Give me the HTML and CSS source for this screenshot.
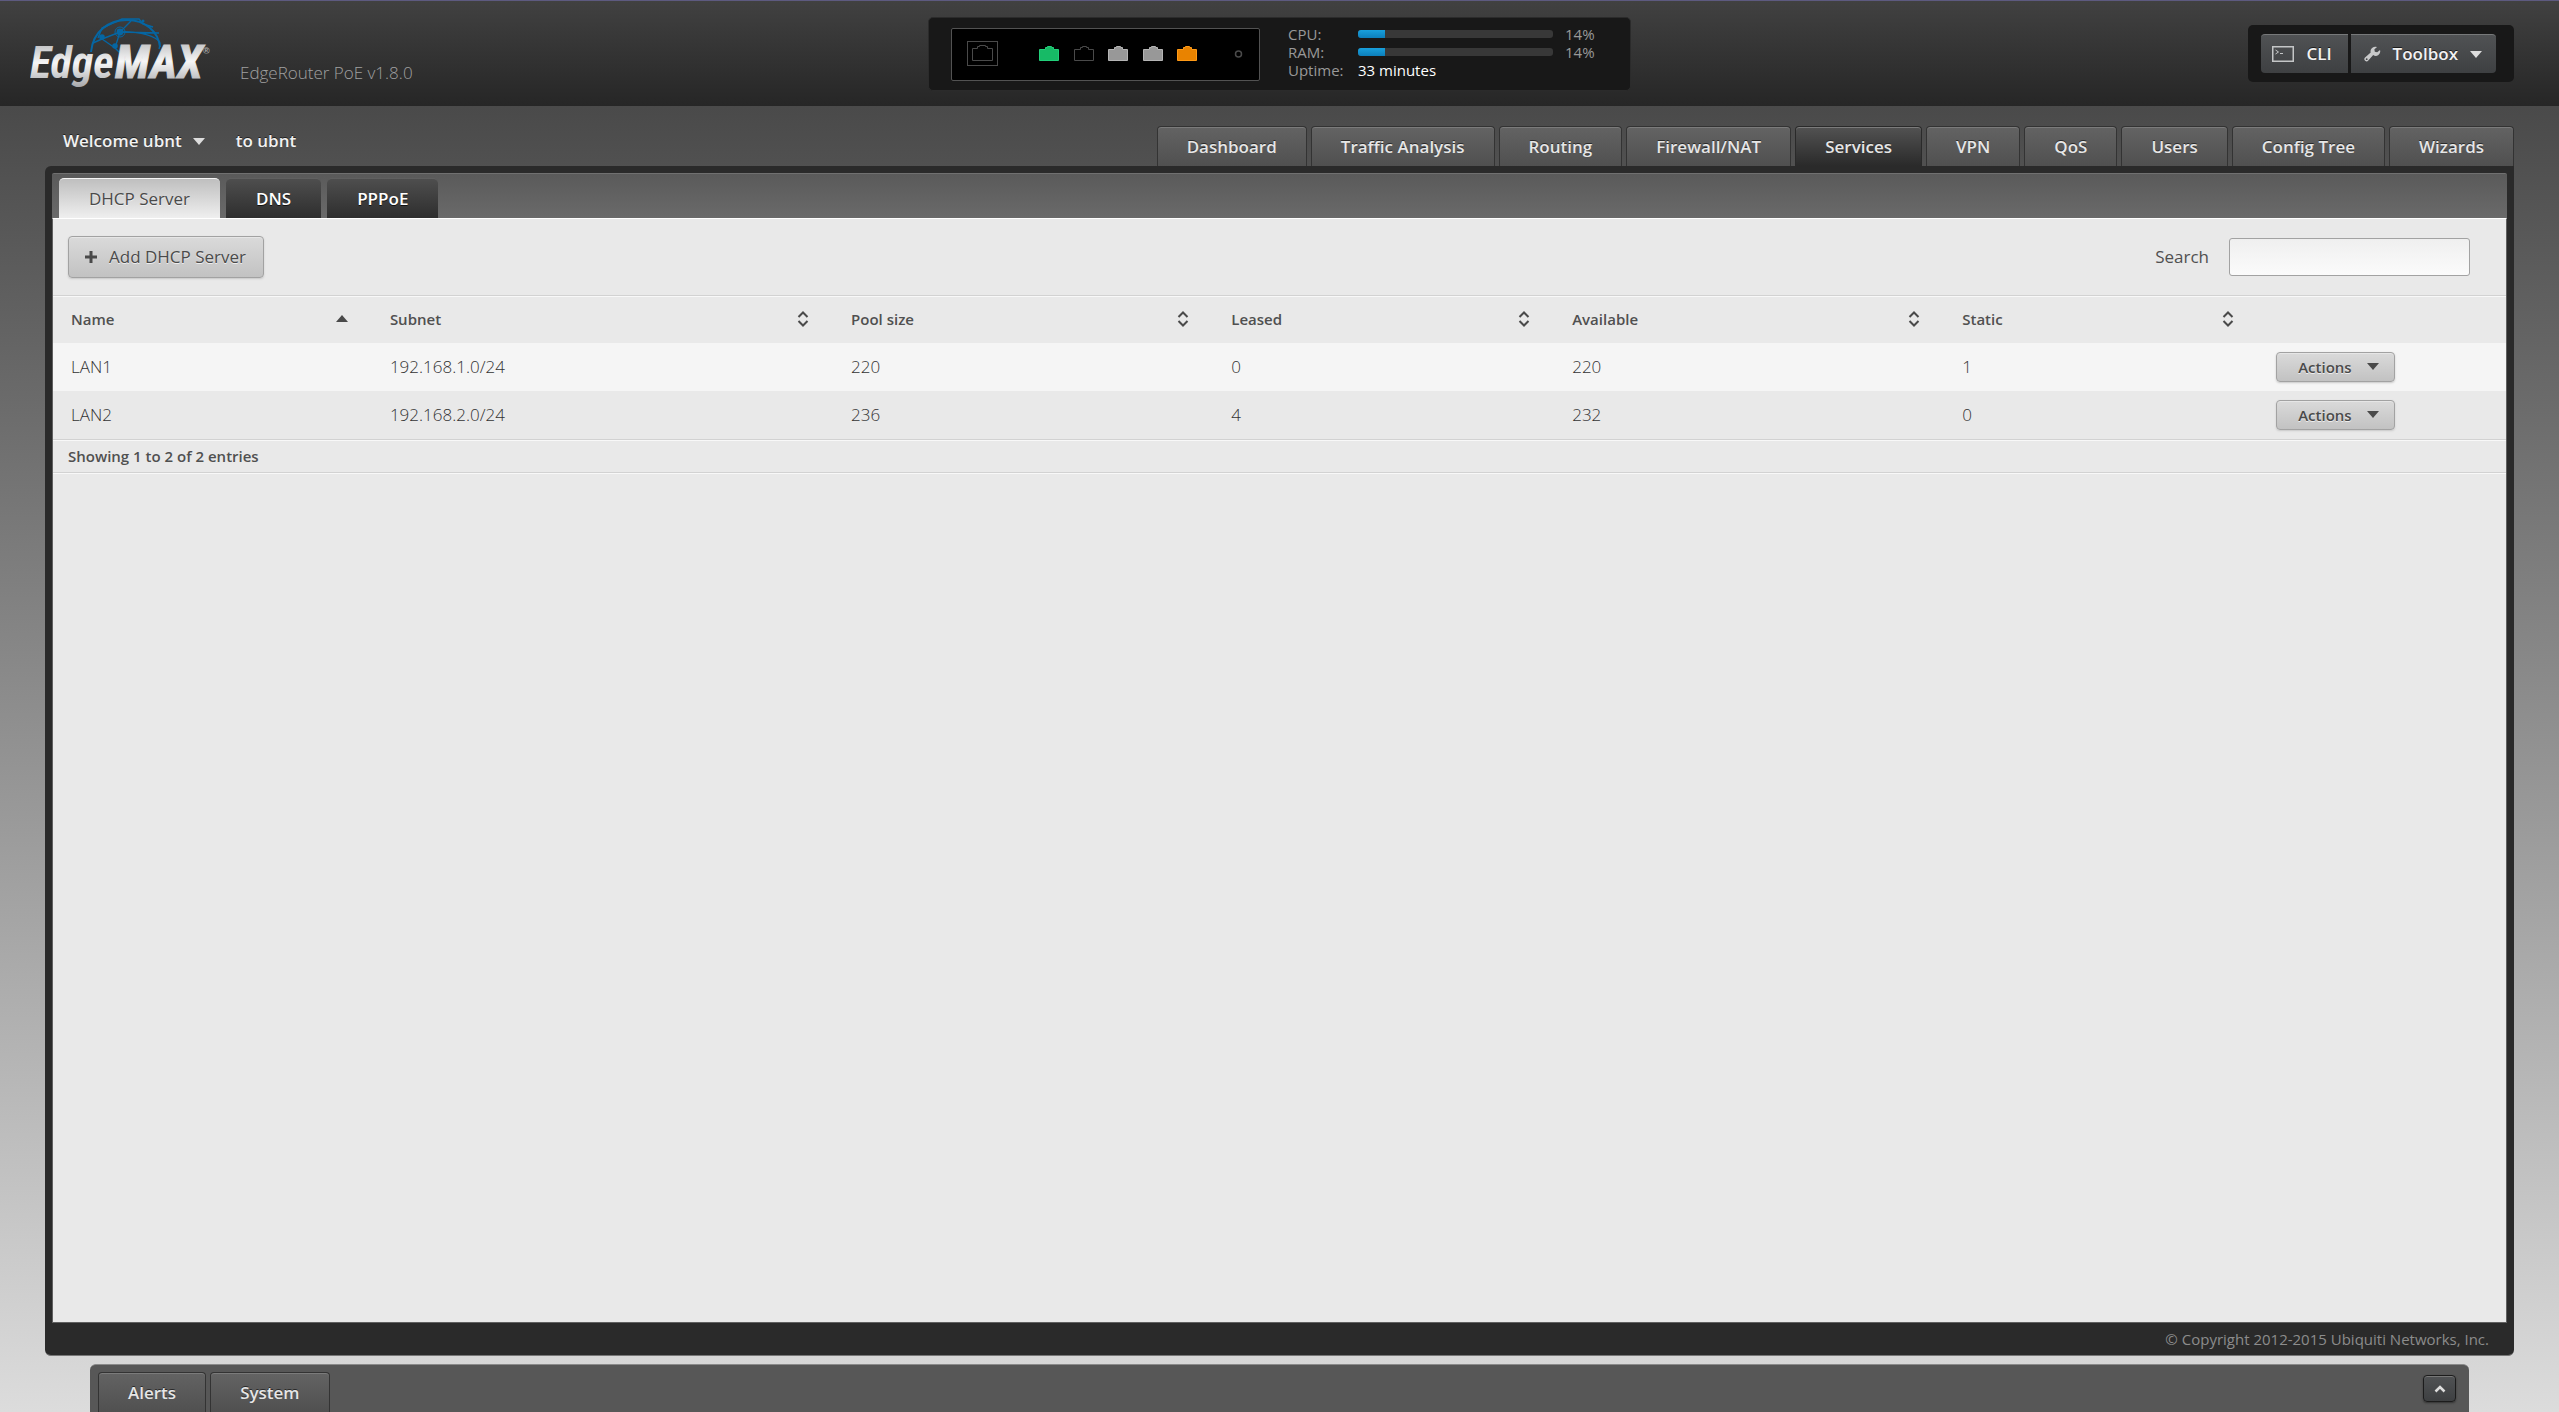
FILE: index.html
```html
<!DOCTYPE html>
<html lang="en">
<head>
<meta charset="utf-8">
<title>EdgeMAX - Services</title>
<link rel="stylesheet" href="styles.css">
</head>
<body>
<header class="header">
  <div class="brand">
    <svg class="logo" viewBox="0 0 182 76" role="img" aria-label="EdgeMAX">
      <defs>
        <linearGradient id="silver" x1="0" y1="0" x2="0" y2="1">
          <stop offset="0.15" stop-color="#c2c3c5"/><stop offset="0.5" stop-color="#f6f6f6"/><stop offset="0.95" stop-color="#a9aaad"/>
        </linearGradient>
      </defs>
      <g fill="none" stroke="#0566a3">
        <path d="M61 35C63 14 79 3 97 3c18 0 31 11 33 27" stroke-width="2"/>
        <path d="M72 22 90 15l39 1M72 22l13 9 5-16 11-11M85 31l6 6M90 15c14-1 30 2 38 8 3 3 2 5 1 9M68 21 72 11 92 2h17l4 5M113 7l10 3M72 22l-9 4" stroke-width="1.4"/>
        <circle cx="90" cy="15" r="5" stroke-width="1"/>
      </g>
      <g fill="#0566a3"><circle cx="90" cy="15" r="3.4"/><circle cx="72" cy="20" r="2.8"/><circle cx="85" cy="29" r="2.8"/><circle cx="113" cy="4" r="1.5"/></g>
      <text x="0" y="61" class="logo-word" fill="url(#silver)">Edge</text>
      <text x="85" y="61" class="logo-word logo-max" fill="url(#silver)" stroke="url(#silver)">MAX</text>
      <text x="173" y="37" class="logo-reg">®</text>
    </svg>
    <span class="model">EdgeRouter PoE v1.8.0</span>
  </div>

  <section class="status">
    <svg class="ports" viewBox="0 0 307 51" aria-label="Ports">
      <defs><path id="port" d="M.5 3.500H6.500V1.500H8.500V.5H12.500V1.500H14.500V3.500H19.500V14.500H.5Z"/></defs>
      <g fill="none" stroke="#4a4a4a">
        <rect x="15.500" y="12.500" width="30" height="24"/>
        <path d="M20.500 19.500h5v-2h2v-1h6v1h2v2h5v12h-20z"/>
        <circle cx="286.500" cy="25" r="3" stroke-width="1.500"/>
        <use href="#port" x="122" y="17"/>
      </g>
      <use href="#port" x="87" y="17" fill="#17ba66" stroke="#22d07a"/>
      <use href="#port" x="156" y="17" fill="#989898" stroke="#b5b5b5"/>
      <use href="#port" x="191" y="17" fill="#989898" stroke="#b5b5b5"/>
      <use href="#port" x="225" y="17" fill="#e98300" stroke="#ff9a16"/>
    </svg>
    <dl class="stats">
      <dt>CPU:</dt><dd class="bar"><span class="fill" style="width:14%"></span></dd><dd>14%</dd>
      <dt>RAM:</dt><dd class="bar"><span class="fill" style="width:14%"></span></dd><dd>14%</dd>
      <dt>Uptime:</dt><dd class="uptime">33 minutes</dd>
    </dl>
  </section>

  <div class="tools">
    <button class="tool" type="button">
      <svg width="22" height="16" viewBox="0 0 22 16" fill="none" stroke="#c4c6c7"><rect x=".75" y=".75" width="20.500" height="14.500" stroke-width="1.500"/><path d="M3.500 4l3 2-3 2M8 7.500h3"/></svg>
      CLI
    </button>
    <button class="tool" type="button">
      <svg width="17" height="16" viewBox="0 0 17 16"><path d="M11.500.8a4.500 4.500 0 0 0-4.800 5.700L1 11.600a2.200 2.200 0 1 0 3.300 3l4.900-5.500A4.500 4.500 0 0 0 16 4l-2.800 2.300-2.400-.6-.4-2.400 2.700-2.200zM2.700 12.300a.9.9 0 1 1 0 1.800.9.900 0 0 1 0-1.800z" fill="#c8c9ca" fill-rule="evenodd"/></svg>
      Toolbox
      <i class="caret"></i>
    </button>
  </div>
</header>

<div class="topbar">
  <div class="welcome"><button class="user" type="button">Welcome ubnt <i class="caret"></i></button><span>to ubnt</span></div>
  <nav class="nav">
    <a href="#">Dashboard</a>
    <a href="#">Traffic Analysis</a>
    <a href="#">Routing</a>
    <a href="#">Firewall/NAT</a>
    <a href="#" class="current">Services</a>
    <a href="#">VPN</a>
    <a href="#">QoS</a>
    <a href="#">Users</a>
    <a href="#">Config Tree</a>
    <a href="#">Wizards</a>
  </nav>
</div>

<main class="panel">
  <nav class="tabs">
    <a href="#" class="active">DHCP Server</a>
    <a href="#">DNS</a>
    <a href="#">PPPoE</a>
  </nav>
  <div class="content">
    <div class="toolbar">
      <button class="btn btn-add" type="button">
        <svg width="14" height="14" viewBox="0 0 14 14"><path d="M1 7h12M7 1v12" stroke="#4a4a4a" stroke-width="3"/></svg>
        Add DHCP Server
      </button>
      <div class="search"><label for="search">Search</label><input id="search" type="text"></div>
    </div>
    <table class="grid">
      <colgroup><col class="c-name"><col class="c-subnet"><col class="c-pool"><col class="c-leased"><col class="c-avail"><col class="c-static"><col></colgroup>
      <thead>
        <tr>
          <th><div>Name <i class="caret up"></i></div></th>
          <th><div>Subnet <svg class="sort" viewBox="0 0 12 16"><path d="M1.500 6 6 1.500 10.500 6M1.500 10 6 14.500 10.500 10"/></svg></div></th>
          <th><div>Pool size <svg class="sort" viewBox="0 0 12 16"><path d="M1.500 6 6 1.500 10.500 6M1.500 10 6 14.500 10.500 10"/></svg></div></th>
          <th><div>Leased <svg class="sort" viewBox="0 0 12 16"><path d="M1.500 6 6 1.500 10.500 6M1.500 10 6 14.500 10.500 10"/></svg></div></th>
          <th><div>Available <svg class="sort" viewBox="0 0 12 16"><path d="M1.500 6 6 1.500 10.500 6M1.500 10 6 14.500 10.500 10"/></svg></div></th>
          <th><div>Static <svg class="sort" viewBox="0 0 12 16"><path d="M1.500 6 6 1.500 10.500 6M1.500 10 6 14.500 10.500 10"/></svg></div></th>
          <th></th>
        </tr>
      </thead>
      <tbody>
        <tr><td>LAN1</td><td>192.168.1.0/24</td><td>220</td><td>0</td><td>220</td><td>1</td><td><button class="btn btn-actions" type="button">Actions <i class="caret"></i></button></td></tr>
        <tr><td>LAN2</td><td>192.168.2.0/24</td><td>236</td><td>4</td><td>232</td><td>0</td><td><button class="btn btn-actions" type="button">Actions <i class="caret"></i></button></td></tr>
      </tbody>
    </table>
    <p class="info">Showing 1 to 2 of 2 entries</p>
  </div>
  <footer class="copyright">© Copyright 2012-2015 Ubiquiti Networks, Inc.</footer>
</main>

<div class="dock">
  <div class="nav">
    <a href="#">Alerts</a>
    <a href="#">System</a>
  </div>
  <button class="expand" type="button" aria-label="Expand"><svg width="12" height="8" viewBox="0 0 12 8"><path d="M1.500 6.500 6 2l4.500 4.500" fill="none" stroke="#ddd" stroke-width="2.500"/></svg></button>
</div>
</body>
</html>
```
FILE: styles.css
```css
* { box-sizing: border-box; }
body {
  margin: 0;
  min-height: 100vh;
  display: flex;
  flex-direction: column;
  font: 17px/20px "Open Sans", sans-serif;
  color: #505050;
  background: linear-gradient(#3e3e3e, #dcdcdc);
}
button { font: inherit; cursor: pointer; }
a { text-decoration: none; }
svg { flex: none; }

.caret {
  width: 0;
  height: 0;
  border: 6px solid transparent;
  border-top: 7px solid #ddd;
  border-bottom: 0;
}
.caret.up { border-top: 0; border-bottom: 7px solid #4a4a4a; }

.header {
  display: grid;
  grid-template-columns: 1fr auto 1fr;
  align-items: start;
  height: 106px;
  padding: 16px 30px 0;
  border-top: 1px solid #5d5a80;
  background: linear-gradient(#414141, #262626);
}
.brand { display: flex; align-items: flex-start; gap: 28px; }
.logo { width: 182px; height: 76px; }
.logo-word { font: italic 700 44px "Liberation Sans Narrow", "Roboto Condensed", "Liberation Sans", sans-serif; }
.logo-max { font-size: 47px; stroke-width: 1; }
.logo-reg { font: 700 9px "Liberation Sans", sans-serif; fill: #aaa; }
.model { margin-top: 46px; font-weight: 300; color: #a0a0a0; }

.status {
  display: flex;
  width: 703px;
  height: 74px;
  padding: 10px 22px;
  border: 1px solid #2b2b2b;
  border-radius: 5px;
  background: #181818;
}
.ports { width: 309px; height: 53px; border: 1px solid #525252; border-radius: 2px; background: #000; }
.stats {
  display: grid;
  grid-template-columns: 70px 195px auto;
  grid-auto-rows: 18px;
  align-items: center;
  align-self: flex-start;
  margin: -3px 0 0 28px;
  font-size: 15px;
  line-height: 18px;
  color: #999;
}
.stats dd { margin: 0 0 0 12px; }
.stats .bar { height: 8px; margin: 0; border-radius: 3px; background: #383838; overflow: hidden; }
.fill { display: block; height: 100%; background: linear-gradient(#18a0dc, #0c7fbb); }
.stats .uptime { grid-column: 2 / 4; margin: 0; color: #fff; }

.tools {
  justify-self: end;
  display: flex;
  gap: 3px;
  margin: 8px 15px 0 0;
  padding: 9px 18px 9px 13px;
  border-radius: 5px;
  background: #181818;
}
.tool {
  display: flex;
  align-items: center;
  gap: 12px;
  height: 39px;
  padding: 0 16px 0 11px;
  border: 0;
  border-top: 1px solid #77797a;
  background: linear-gradient(#505254, #3e4042);
  font-weight: 600;
  color: #f2f2f2;
  text-shadow: 0 -1px #1c1c1c;
}
.tool:first-child { border-radius: 4px 0 0 4px; }
.tool:last-child { gap: 12px; padding: 0 14px 0 13px; border-radius: 0 4px 4px 0; }

.topbar { display: flex; justify-content: space-between; margin: 0 45px; padding-top: 20px; }
.welcome { display: flex; gap: 31px; padding: 5px 18px; font-weight: 600; color: #f2f2f2; text-shadow: 0 -1px #222; }
.user {
  display: flex;
  align-items: center;
  gap: 11px;
  height: 20px;
  padding: 0;
  border: 0;
  background: none;
  color: inherit;
  text-shadow: inherit;
}
.nav { display: flex; gap: 4px; }
.nav a {
  height: 40px;
  padding: 10px 29px;
  border: 1px solid #333;
  border-bottom: 0;
  border-radius: 4px 4px 0 0;
  background: linear-gradient(#636363, #505050);
  box-shadow: inset 0 1px #7b7b7b;
  font-weight: 600;
  color: #e6e6e6;
  text-shadow: 0 -1px #2a2a2a;
}
.nav .current { background: linear-gradient(#525252, #2a2a2a); border-color: #2a2a2a; }

.panel {
  flex: 1;
  display: flex;
  flex-direction: column;
  margin: 0 45px;
  padding: 7px 7px 0;
  border-bottom: 1px solid #777;
  border-radius: 6px 0 6px 6px;
  background: #2a2a2a;
}
.tabs {
  display: flex;
  gap: 6px;
  height: 45px;
  padding: 4px 7px 0;
  border-top: 1px solid #707070;
  border-radius: 2px 2px 0 0;
  background: linear-gradient(#5a5a5a, #6a6a6a);
}
.tabs a {
  padding: 10px 30px;
  border-top: 1px solid #606060;
  border-radius: 5px 5px 0 0;
  background: linear-gradient(#4e4e4e, #2e2e2e);
  font-weight: 600;
  color: #fff;
  text-shadow: 0 1px #111;
}
.tabs .active { border-color: #f5f5f5; background: linear-gradient(#bfbfbf, #efefef); color: #4a4a4a; font-weight: 400; text-shadow: 0 1px #f0f0f0; }

.content { flex: 1; border: 1px solid #606060; border-top-color: #fff; background: #e9e9e9; }
.toolbar { display: flex; justify-content: space-between; align-items: center; height: 77px; padding: 0 36px 0 15px; border-bottom: 1px solid #d2d2d2; }
.btn {
  display: inline-flex;
  align-items: center;
  border: 1px solid #a2a2a2;
  border-radius: 4px;
  background: linear-gradient(#dadada, #c2c2c2);
  box-shadow: inset 0 1px #e6e6e6, 0 1px 2px #c8c8c8;
  color: #4a4a4a;
  text-shadow: 0 1px #eee;
}
.btn-add { gap: 11px; height: 42px; padding: 0 17px 0 15px; }
.btn-actions { gap: 15px; height: 30px; padding: 0 15px 0 21px; font-size: 15px; font-weight: 600; vertical-align: middle; }
.btn .caret { border-top-color: #4a4a4a; }
.search { display: flex; align-items: center; gap: 20px; }
.search input {
  width: 241px;
  height: 38px;
  border: 1px solid #a2a2a2;
  border-radius: 3px;
  background: linear-gradient(#efefef, #fbfbfb);
  font: inherit;
}

.grid { width: 100%; table-layout: fixed; border-collapse: collapse; border-top: 1px solid #f8f8f8; }
.c-name { width: 13%; }
.c-subnet { width: 18.8%; }
.c-pool { width: 15.5%; }
.c-leased { width: 13.9%; }
.c-avail { width: 15.9%; }
.c-static { width: 12.8%; }
.grid th { height: 46px; padding: 0 24px 2px 18px; font-size: 15px; font-weight: 600; text-align: left; }
.grid th div { display: flex; align-items: center; justify-content: space-between; }
.sort { width: 12px; height: 16px; fill: none; stroke: #4a4a4a; stroke-width: 2; }
.grid td { height: 48px; padding: 0 18px; font-weight: 300; color: #333; }
.grid tbody tr:nth-child(odd) { background: #f5f5f5; }
.info {
  margin: 0;
  padding: 6px 15px;
  border: 1px solid #d2d2d2;
  border-width: 1px 0;
  box-shadow: inset 0 1px #f8f8f8, 0 1px #f8f8f8;
  font-size: 15px;
  font-weight: 600;
}
.copyright { padding: 6px 18px; text-align: right; font-size: 15px; color: #8c8c8c; }

.dock {
  display: flex;
  justify-content: space-between;
  align-items: flex-start;
  height: 48px;
  margin: 8px 90px 0;
  padding: 7px 13px 0 8px;
  border-top: 1px solid #8a8a8a;
  border-radius: 6px 6px 0 0;
  background: #575757;
}
.expand {
  display: grid;
  place-items: center;
  width: 33px;
  height: 27px;
  margin-top: 3px;
  padding: 0;
  border: 1px solid #1c1c1c;
  border-radius: 4px;
  background: linear-gradient(#505254, #3e4042);
  box-shadow: inset 0 1px #777, 0 1px 2px #333;
}
```
